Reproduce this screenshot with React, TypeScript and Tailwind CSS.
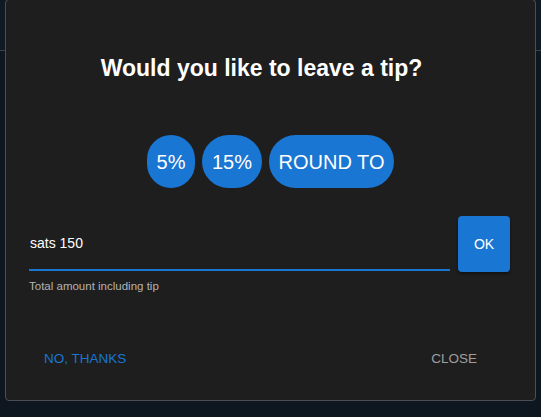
import React from "react";

export default function App() {
  return (
    <div
      className="relative w-[541px] h-[417px] overflow-hidden bg-[#0e1620]"
      style={{ fontFamily: '"Liberation Sans", Arial, sans-serif' }}
    >
      <div className="h-[51px] border-b border-[#3c4248] bg-[#101a25]" />
      <div className="absolute left-[5px] top-[-1px] w-[531px] h-[402px] border border-[#4b4f54] rounded-[4px] bg-[#1e1e1e] flex flex-col">
        <h2 className="pt-[54px] pr-[18px] text-center text-[23px] leading-[28px] font-bold text-white">
          Would you like to leave a tip?
        </h2>
        <div className="mt-[53px] flex justify-center gap-[6.5px]">
          <button className="h-[53px] px-[10px] rounded-full bg-[#1976d2] text-white text-[20px] leading-[24px]">
            5%
          </button>
          <button className="h-[53px] px-[10px] rounded-full bg-[#1976d2] text-white text-[20px] leading-[24px]">
            15%
          </button>
          <button className="h-[53px] px-[10px] rounded-full bg-[#1976d2] text-white text-[20px] leading-[24px]">
            ROUND TO
          </button>
        </div>
        <div className="mt-[28px] flex items-start gap-[8px] pl-[23px]">
          <div className="w-[421px] flex flex-col">
            <div className="pt-[17px] pb-[16px] text-[14px] leading-[20px] text-white border-b-2 border-[#1976d2] pl-[1px]">
              sats 150
            </div>
            <div className="mt-[7px] text-[11.5px] leading-[16px] text-[#b3b3b3]">
              Total amount including tip
            </div>
          </div>
          <button className="w-[52px] h-[56px] rounded-[4px] bg-[#1976d2] text-white text-[14px] shadow-[0_2px_3px_rgba(0,0,0,0.4)]">
            OK
          </button>
        </div>
        <div className="mt-[55px] flex justify-between pl-[38px] pr-[58px] text-[13.5px] leading-[20px]">
          <span className="text-[#1976d2]">NO, THANKS</span>
          <span className="text-[#9e9e9e]">CLOSE</span>
        </div>
      </div>
    </div>
  );
}
